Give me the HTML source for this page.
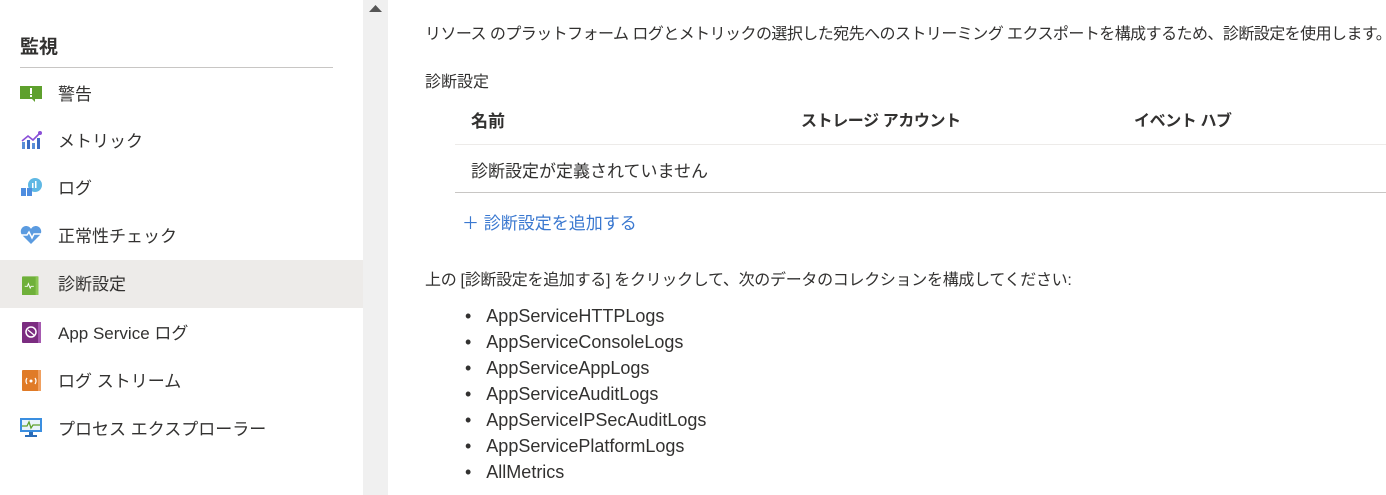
<!DOCTYPE html>
<html><head><meta charset="utf-8"><style>
body{margin:0;width:1386px;height:495px;overflow:hidden;background:#fff;font-family:"Liberation Sans","Noto Sans CJK JP",sans-serif;color:#323130;position:relative}
.a{position:absolute;white-space:nowrap}
.side{position:absolute;left:0;top:0;width:363px;height:495px}
.sb{position:absolute;left:363px;top:0;width:25px;height:495px;background:#f0f0f0}
.item{position:absolute;left:0;width:363px;height:48px;font-size:17px}
.item .ic{position:absolute;left:20px;top:14px;width:22px;height:18px}
.item .t{position:absolute;left:58px;top:10px}
.sel{background:#edebe9}
</style></head><body>
<div class="side">
<div class="a" style="left:20px;top:32px;font-size:19px;font-weight:bold;color:#323130">監視</div>
<div class="a" style="left:20px;top:67px;width:313px;height:1px;background:#c8c6c4"></div>

<div class="item" style="top:70px"><svg class="ic" viewBox="0 0 22 18"><rect x="0" y="2" width="22" height="13" fill="#5ea02d"/><path d="M12 15l3 3v-3z" fill="#5ea02d"/><rect x="10" y="4" width="2" height="6" fill="#fff"/><rect x="10" y="11" width="2" height="2" fill="#fff"/></svg><span class="t">警告</span></div>

<div class="item" style="top:117px"><svg class="ic" viewBox="0 0 22 18"><rect x="2" y="11" width="3" height="7" fill="#5b8fd8"/><rect x="7" y="9" width="3" height="9" fill="#3c6cc4"/><rect x="12" y="12" width="3" height="6" fill="#5b8fd8"/><rect x="17" y="7" width="3" height="11" fill="#3c6cc4"/><path d="M2 10l6-5 5 4 7-7" stroke="#8a4fd8" stroke-width="1.6" fill="none"/><circle cx="20" cy="2" r="2" fill="#8a4fd8"/></svg><span class="t">メトリック</span></div>

<div class="item" style="top:164px"><svg class="ic" viewBox="0 0 22 18"><circle cx="15" cy="7" r="7" fill="#5fb8e4"/><rect x="12" y="5" width="1.5" height="5" fill="#fff"/><rect x="15" y="3" width="1.5" height="7" fill="#fff"/><rect x="1" y="10" width="5" height="4" fill="#4e8de0"/><rect x="1" y="14" width="5" height="4" fill="#4e8de0"/><rect x="7" y="10" width="5" height="8" fill="#4e8de0"/></svg><span class="t">ログ</span></div>

<div class="item" style="top:212px"><svg class="ic" viewBox="0 0 22 18"><path d="M11 18L2 9C-1 5 2 0 6 0c2 0 4 1 5 3 1-2 3-3 5-3 4 0 7 5 4 9z" fill="#5b9be0"/><path d="M1 9h6l2-3 3 6 2-4h7" stroke="#fff" stroke-width="1.5" fill="none"/></svg><span class="t">正常性チェック</span></div>

<div class="item sel" style="top:260px"><svg class="ic" viewBox="0 0 22 18" style="left:22px;width:20px;top:14px;height:21px"><rect x="0" y="0" width="18" height="21" rx="1" fill="#6fb03a"/><rect x="15" y="0" width="3" height="21" fill="#8bc653"/><path d="M3 11h3l1-3 2 5 1-2h3" stroke="#fff" stroke-width="1" fill="none"/></svg><span class="t">診断設定</span></div>

<div class="item" style="top:309px"><svg class="ic" viewBox="0 0 20 21" style="left:22px;width:20px;top:13px;height:21px"><rect x="0" y="0" width="19" height="21" rx="1" fill="#7b2c80"/><rect x="16" y="0" width="3" height="21" fill="#a65ab0"/><circle cx="9" cy="10" r="5" stroke="#fff" stroke-width="1.5" fill="none"/><path d="M6 8l6 5" stroke="#fff" stroke-width="1.2"/></svg><span class="t">App Service ログ</span></div>

<div class="item" style="top:357px"><svg class="ic" viewBox="0 0 20 21" style="left:22px;width:20px;top:13px;height:21px"><rect x="0" y="0" width="19" height="21" rx="1" fill="#e07b27"/><rect x="16" y="0" width="3" height="21" fill="#f0a060"/><circle cx="9" cy="11" r="1.5" fill="#fff"/><path d="M5 8q-2 3 0 6M13 8q2 3 0 6" stroke="#fff" stroke-width="1.2" fill="none"/></svg><span class="t">ログ ストリーム</span></div>

<div class="item" style="top:405px"><svg class="ic" viewBox="0 0 22 20" style="left:20px;width:22px;top:13px;height:20px"><rect x="0" y="0" width="22" height="14" fill="#3a8ee0"/><rect x="2" y="2" width="18" height="10" fill="#eaf4fc"/><path d="M2 8h5l2-4 2 6 2-3h7" stroke="#5ea02d" stroke-width="1.3" fill="none"/><rect x="9" y="14" width="4" height="3" fill="#2a6cb8"/><rect x="5" y="17" width="12" height="2" fill="#2a6cb8"/></svg><span class="t">プロセス エクスプローラー</span></div>
</div>
<div class="sb"><svg style="position:absolute;left:6px;top:5px" width="13" height="8" viewBox="0 0 13 8"><path d="M0 7L6.5 0 13 7z" fill="#555"/></svg></div>

<div class="a" style="left:425px;top:20px;font-size:16px;letter-spacing:-0.55px">リソース のプラットフォーム ログとメトリックの選択した宛先へのストリーミング エクスポートを構成するため、診断設定を使用します。</div>
<div class="a" style="left:425px;top:68px;font-size:16px">診断設定</div>
<div class="a" style="left:471px;top:107px;font-size:17px;font-weight:bold">名前</div>
<div class="a" style="left:801px;top:107px;font-size:16px;font-weight:bold;letter-spacing:-0.4px">ストレージ アカウント</div>
<div class="a" style="left:1134px;top:107px;font-size:16px;font-weight:bold;letter-spacing:-0.4px">イベント ハブ</div>
<div class="a" style="left:455px;top:144px;width:931px;height:1px;background:#edebe9"></div>
<div class="a" style="left:471px;top:157px;font-size:17px">診断設定が定義されていません</div>
<div class="a" style="left:455px;top:192px;width:931px;height:1px;background:#c8c6c4"></div>
<div class="a" style="left:462px;top:209px;font-size:17px;color:#3a78d0">＋ 診断設定を追加する</div>
<div class="a" style="left:425px;top:266px;font-size:16px;letter-spacing:-0.3px">上の [診断設定を追加する] をクリックして、次のデータのコレクションを構成してください:</div>
<div class="a" style="left:465px;top:303px;font-size:18px;line-height:26px">
<div>•&nbsp;&nbsp;&nbsp;AppServiceHTTPLogs</div>
<div>•&nbsp;&nbsp;&nbsp;AppServiceConsoleLogs</div>
<div>•&nbsp;&nbsp;&nbsp;AppServiceAppLogs</div>
<div>•&nbsp;&nbsp;&nbsp;AppServiceAuditLogs</div>
<div>•&nbsp;&nbsp;&nbsp;AppServiceIPSecAuditLogs</div>
<div>•&nbsp;&nbsp;&nbsp;AppServicePlatformLogs</div>
<div>•&nbsp;&nbsp;&nbsp;AllMetrics</div>
</div>
</body></html>
